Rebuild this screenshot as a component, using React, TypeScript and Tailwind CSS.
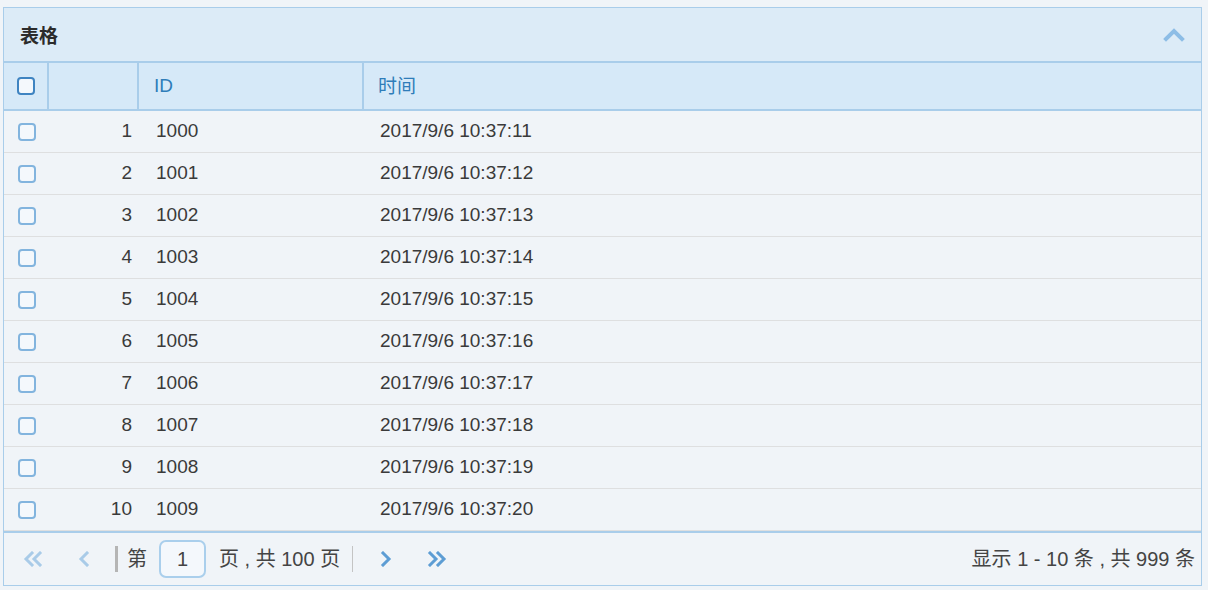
import React from 'react';

const rows = Array.from({ length: 10 }, (_, i) => ({
  no: i + 1,
  id: 1000 + i,
  time: `2017/9/6 10:37:${11 + i}`,
}));

const font = { fontFamily: '"Liberation Sans", "Noto Sans CJK SC", sans-serif' };

const Check: React.FC<{ dark?: boolean }> = ({ dark }) => (
  <span
    className={`block w-[18px] h-[18px] rounded-[4px] border-2 bg-[#f4f8fc] ${dark ? 'border-[#3f84c1]' : 'border-[#82b4de]'}`}
  />
);

const Chev: React.FC<{ d: string; w: number; h: number; color: string; sw?: number }> = ({ d, w, h, color, sw = 3 }) => (
  <svg width={w} height={h} viewBox={`0 0 ${w} ${h}`} fill="none" stroke={color} strokeWidth={sw} strokeLinecap="square" strokeLinejoin="miter">
    <path d={d} />
  </svg>
);

export default function App() {
  return (
    <div className="bg-[#f0f4f8] h-[590px] w-[1208px] pt-[7px] pl-[3px] text-[#444]" style={font}>
      <div className="w-[1199px] border border-[#a9cdea]">
        {/* Title bar */}
        <div className="h-[55px] bg-[#dcebf7] border-b-2 border-[#a9cdea] flex items-center justify-between pl-[16px] pr-[16px]">
          <span className="text-[19px] font-bold text-[#2b2b2b] pt-[5px]">表格</span>
          <Chev d="M3 12 L11 4 L19 12" w={22} h={15} color="#8dbde6" sw={4} />
        </div>

        {/* Column header */}
        <div className="h-[48px] bg-[#d6e9f8] border-b-2 border-[#a9cdea] flex text-[19px] text-[#2f7db9]">
          <div className="w-[45px] border-r-2 border-[#a9cdea] flex items-center justify-center pl-[1px]">
            <Check dark />
          </div>
          <div className="w-[90px] border-r-2 border-[#a9cdea]" />
          <div className="w-[225px] border-r-2 border-[#a9cdea] flex items-center pl-[15px]">ID</div>
          <div className="flex-1 flex items-center pl-[14px] pt-[3px]">时间</div>
        </div>

        {/* Rows */}
        {rows.map((r) => (
          <div key={r.no} className="h-[42px] border-b border-[#dedfe0] flex items-center text-[19px] text-[#3a3a3a]">
            <div className="w-[45px] flex items-center justify-center pl-[1px]">
              <Check />
            </div>
            <div className="w-[90px] text-right pr-[7px]">{r.no}</div>
            <div className="w-[225px] pl-[17px]">{r.id}</div>
            <div className="flex-1 pl-[16px]">{r.time}</div>
          </div>
        ))}

        {/* Pager */}
        <div className="h-[54px] border-t-2 border-[#a9cdea] flex items-center text-[20px] text-[#444]">
          <div className="ml-[19px] w-[20px] flex items-center">
            <Chev d="M9 2 L3 8 L9 14 M17 2 L11 8 L17 14" w={20} h={16} color="#a9cbe8" />
          </div>
          <div className="ml-[35px] w-[12px] flex items-center">
            <Chev d="M9 2 L3 8 L9 14" w={12} h={16} color="#a9cbe8" />
          </div>
          <div className="ml-[25px] w-[3px] h-[26px] bg-[#b5b5b5]" />
          <span className="ml-[9px]">第</span>
          <div className="ml-[12px] w-[47px] h-[38px] rounded-[7px] border-2 border-[#aacfec] bg-[#f4f8fc] flex items-center justify-center">
            1
          </div>
          <span className="ml-[13px] whitespace-pre">页 , 共 100 页</span>
          <div className="ml-[12px] w-px h-[26px] bg-[#c4c4c4]" />
          <div className="ml-[27px] w-[12px] flex items-center">
            <Chev d="M3 2 L9 8 L3 14" w={12} h={16} color="#5d9dd4" />
          </div>
          <div className="ml-[35px] w-[20px] flex items-center">
            <Chev d="M3 2 L9 8 L3 14 M11 2 L17 8 L11 14" w={20} h={16} color="#5d9dd4" />
          </div>
          <div className="flex-1" />
          <span className="pr-[6px] whitespace-pre">显示 1 - 10 条 , 共 999 条</span>
        </div>
      </div>
    </div>
  );
}
